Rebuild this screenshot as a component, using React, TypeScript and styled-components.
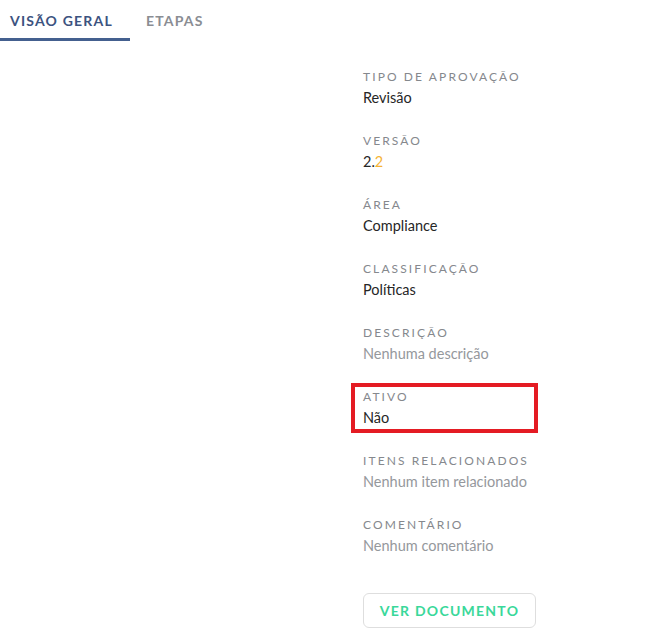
import React from "react";
import styled, { createGlobalStyle, css } from "styled-components";

const GlobalStyle = createGlobalStyle`
  html, body { margin: 0; padding: 0; background: #ffffff; }
  body { font-family: Lato, "Open Sans", "Liberation Sans", sans-serif; }
`;

const Page = styled.div`
  width: 666px;
  min-height: 638px;
  background: #fff;
`;

const TabBar = styled.nav`
  display: flex;
  gap: 6px;
  height: 41px;
`;

const Tab = styled.div<{ $active?: boolean }>`
  display: flex;
  align-items: center;
  padding: 0 17px 0 10px;
  font-size: 14px;
  font-weight: 700;
  letter-spacing: 1.2px;
  color: ${(p) => (p.$active ? "#3c5380" : "#8a8d93")};
  border-bottom: 3px solid ${(p) => (p.$active ? "#44608f" : "transparent")};
  box-sizing: border-box;
  padding-top: 3px;
`;

const Body = styled.main`
  display: grid;
  grid-template-columns: 363px 174px;
  padding-top: 28px;
`;

const Details = styled.section`
  grid-column: 2;
  display: flex;
  flex-direction: column;
  gap: 25px;
`;

const Field = styled.div<{ $highlight?: boolean }>`
  position: relative;
  display: flex;
  flex-direction: column;
  gap: 3px;
  ${(p) =>
    p.$highlight &&
    css`
      &::after {
        content: "";
        position: absolute;
        left: -12px;
        right: -1px;
        top: -6px;
        bottom: -5px;
        border: 4px solid #e41b23;
      }
    `}
`;

const Label = styled.span`
  font-size: 12px;
  line-height: 16px;
  letter-spacing: 2.1px;
  color: #85888d;
  text-transform: uppercase;
`;

const Value = styled.span<{ $empty?: boolean }>`
  font-size: 14.5px;
  line-height: 20px;
  color: ${(p) => (p.$empty ? "#95989c" : "#262626")};
`;

const Accent = styled.span`
  color: #f5b335;
`;

const Button = styled.button`
  margin-top: 12px;
  width: 173px;
  height: 35px;
  border: 1px solid #dedede;
  border-radius: 6px;
  background: #fff;
  font-family: Lato, "Open Sans", "Liberation Sans", sans-serif;
  font-size: 14px;
  font-weight: 700;
  letter-spacing: 1.25px;
  color: #3ad89a;
  cursor: pointer;
`;

type Item = { label: string; value: React.ReactNode; empty?: boolean; highlight?: boolean };

const items: Item[] = [
  { label: "Tipo de aprovação", value: "Revisão" },
  { label: "Versão", value: <>2.<Accent>2</Accent></> },
  { label: "Área", value: "Compliance" },
  { label: "Classificação", value: "Políticas" },
  { label: "Descrição", value: "Nenhuma descrição", empty: true },
  { label: "Ativo", value: "Não", highlight: true },
  { label: "Itens relacionados", value: "Nenhum item relacionado", empty: true },
  { label: "Comentário", value: "Nenhum comentário", empty: true },
];

export default function App() {
  return (
    <Page>
      <GlobalStyle />
      <TabBar>
        <Tab $active>VISÃO GERAL</Tab>
        <Tab>ETAPAS</Tab>
      </TabBar>
      <Body>
        <Details>
          {items.map((it) => (
            <Field key={it.label} $highlight={it.highlight}>
              <Label>{it.label}</Label>
              <Value $empty={it.empty}>{it.value}</Value>
            </Field>
          ))}
          <Button>VER DOCUMENTO</Button>
        </Details>
      </Body>
    </Page>
  );
}
